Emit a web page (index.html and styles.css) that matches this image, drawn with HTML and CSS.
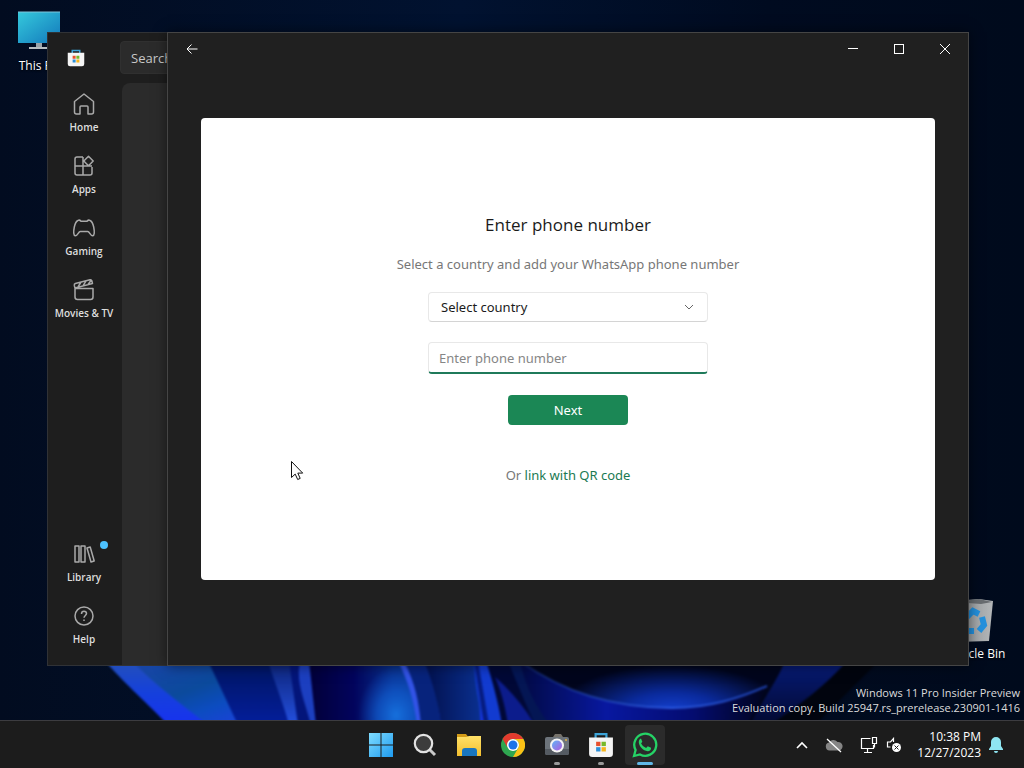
FILE: index.html
```html
<!DOCTYPE html>
<html lang="en">
<head>
<meta charset="utf-8">
<meta name="viewport" content="width=device-width, initial-scale=1">
<title>Desktop</title>
<link rel="stylesheet" href="styles.css">
</head>
<body>
<svg class="defs" width="0" height="0" aria-hidden="true">
  <defs>
    <linearGradient id="w1" x1="0" y1="0" x2="0" y2="1"><stop offset="0" stop-color="#2450b8"/><stop offset=".5" stop-color="#1540dc"/><stop offset="1" stop-color="#1832f0"/></linearGradient>
    <linearGradient id="w2" x1="0" y1="0" x2="1" y2="1"><stop offset="0" stop-color="#1a44a8"/><stop offset=".4" stop-color="#0b4a9c"/><stop offset=".6" stop-color="#0c4cc0"/><stop offset="1" stop-color="#2a38f0"/></linearGradient>
    <linearGradient id="w3" x1="0" y1="0" x2="0" y2="1"><stop offset="0" stop-color="#001560"/><stop offset="1" stop-color="#041e9c"/></linearGradient>
    <linearGradient id="w4" x1="0" y1="0" x2="0" y2="1"><stop offset="0" stop-color="#0d2478"/><stop offset="1" stop-color="#2450e0"/></linearGradient>
    <linearGradient id="w5" x1="0" y1="0" x2="1" y2="0"><stop offset="0" stop-color="#020038"/><stop offset=".4" stop-color="#02045c"/><stop offset=".75" stop-color="#08308c"/><stop offset="1" stop-color="#0a3c98"/></linearGradient>
    <radialGradient id="w6"><stop offset="0" stop-color="#1670dc"/><stop offset=".5" stop-color="#115cd0" stop-opacity=".7"/><stop offset="1" stop-color="#1050c8" stop-opacity="0"/></radialGradient>
    <radialGradient id="w7" gradientUnits="userSpaceOnUse" cx="0" cy="0" r="1" gradientTransform="matrix(115 0 0 46 672 46)"><stop offset="0" stop-color="#1440d0"/><stop offset=".4" stop-color="#0a2a9c"/><stop offset="1" stop-color="#01051c"/></radialGradient>
    <linearGradient id="w8" x1="0" y1="0" x2="1" y2="0"><stop offset="0" stop-color="#02104c"/><stop offset="1" stop-color="#0a3090"/></linearGradient>
    <linearGradient id="w9" x1="0" y1="0" x2="1" y2="0"><stop offset="0" stop-color="#020a44"/><stop offset=".35" stop-color="#0818a0"/><stop offset=".7" stop-color="#040c70"/><stop offset="1" stop-color="#01041c"/></linearGradient>
    <linearGradient id="w10" x1="0" y1="0" x2="1" y2="0"><stop offset="0" stop-color="#1b3a90" stop-opacity=".5"/><stop offset=".6" stop-color="#2a58e0"/><stop offset="1" stop-color="#1c40b0"/></linearGradient>
    <linearGradient id="w11" x1="0" y1="0" x2="0" y2="1"><stop offset="0" stop-color="#071c78"/><stop offset="1" stop-color="#020830"/></linearGradient>
    <linearGradient id="screen" x1="0" y1="0" x2="1" y2="1"><stop offset="0" stop-color="#35c9dc"/><stop offset="1" stop-color="#1278bb"/></linearGradient>
    <linearGradient id="win" x1="0" y1="0" x2="1" y2="1"><stop offset="0" stop-color="#7fdcff"/><stop offset="1" stop-color="#1e9bf0"/></linearGradient>
    <linearGradient id="folder" x1="0" y1="0" x2="0" y2="1"><stop offset="0" stop-color="#ffe168"/><stop offset="1" stop-color="#f3bf2f"/></linearGradient>
    <linearGradient id="bin" x1="0" y1="0" x2="1" y2="0"><stop offset="0" stop-color="#8c9093"/><stop offset="1" stop-color="#b4b7b9"/></linearGradient>
    <linearGradient id="lens" x1="0" y1="0" x2="1" y2="1"><stop offset="0" stop-color="#5fb4f5"/><stop offset="1" stop-color="#b05be0"/></linearGradient>
    <symbol id="store" viewBox="0 0 24 24">
      <path d="M7 7V2h10v5" fill="none" stroke="#3da4d8" stroke-width="2"/>
      <path d="M1 5h22v15a3 3 0 0 1-3 3H4a3 3 0 0 1-3-3z" fill="#f5f5f5"/>
      <path d="M7.500 9h4v4h-4z" fill="#e8502c"/><path d="M12.500 9h4v4h-4z" fill="#76b82a"/><path d="M7.500 14h4v4h-4z" fill="#2c8fd8"/><path d="M12.500 14h4v4h-4z" fill="#f5b51e"/>
    </symbol>
  </defs>
</svg>

<div class="screen">
  <main class="desktop">
    <svg class="wallpaper" viewBox="0 0 1024 55" preserveAspectRatio="none" aria-hidden="true">
      <path d="M105-4H600V60H168C142 33 124 18 105-4z" fill="url(#w1)"/>
      <path d="M132-4H300V60H208C180 38 155 20 132-4z" fill="url(#w2)"/>
      <path d="M208-4h90v64h-60z" fill="url(#w3)"/>
      <path d="M268-4h40l8 64h-27c-5-20-13-38-21-64z" fill="url(#w4)"/>
      <path d="M289-4h12l13 64h-16z" fill="#03157a"/>
      <path d="M300-4h12l4 64h-5C303 30 296 18 300-4z" fill="#1c3fc0"/>
      <path d="M309-4H408l12 64H316z" fill="url(#w5)"/>
      <ellipse cx="396" cy="50" rx="38" ry="48" fill="url(#w6)"/>
      <path d="M400-4h24c12 24 14 42 17 64h-24c0-24-6-42-17-64z" fill="#07237c"/>
      <path d="M398-4h6c12 24 15 42 17 64h-4C414 36 408 16 398-4z" fill="#3253e6"/>
      <path d="M424-4h52l5 64h-40c-3-24-8-42-17-64z" fill="url(#w8)"/>
      <path d="M474-4h12c9 24 12 42 16 64h-17c-7-22-10-40-11-64z" fill="#123bd0"/>
      <path d="M478-4l11 64h-5L474-4z" fill="#061c80"/>
      <path d="M486-4h140v64H502C498 36 493 18 486-4z" fill="#010836"/>
      <path d="M495 12c14 12 28 28 40 48h-27C505 40 501 26 495 12z" fill="#0c1c8c"/>
      <path d="M508-4h15C548 22 578 34 615 38v22h-80C524 35 516 16 508-4z" fill="#041654"/>
      <path d="M520-4h290C790 20 770 40 750 60H580z" fill="#01051c"/>
      <path d="M520-4C564 28 616 43 672 43c38 0 68-10 95-22L730-4z" fill="url(#w7)"/>
      <path d="M520-4C564 28 616 43 672 43c38 0 68-10 95-22-6 14-13 26-20 39H550c-14-18-24-36-30-64z" fill="url(#w9)"/>
      <path d="M520-4C564 28 616 43 672 43c38 0 68-10 95-22" fill="none" stroke="url(#w10)" stroke-width="2"/>
      <path d="M785-4h62C825 22 798 40 770 60H750C762 36 776 18 785-4z" fill="url(#w11)"/>
      <path d="M847-4h32L815 60h-44C800 40 825 22 847-4z" fill="#01040e"/>
    </svg>

    <div class="shortcut shortcut-pc">
      <svg width="44" height="40" viewBox="0 0 44 40" aria-hidden="true">
        <path d="M1 1h42v31H1z" fill="url(#screen)"/><path d="M1 1h42" stroke="#7fc5dc"/><path d="M19 32h6v4h-6z" fill="#9aa3a8"/><path d="M12 37h20" stroke="#b7bdc0" stroke-width="2"/>
      </svg>
      <span>This PC</span>
    </div>
    <div class="shortcut shortcut-bin">
      <svg width="44" height="46" viewBox="0 0 44 46" aria-hidden="true">
        <path d="M1 3l26-2 14 2-4 40-32 1z" fill="url(#bin)"/><path d="M3 4l24-3 13 3-11 2z" fill="#686c70"/>
        <g fill="none" stroke="#2490dc" stroke-width="6"><path d="M15 19l6-6 6 3"/><path d="M30 19l2 8-5 6"/><path d="M22 33h-7l-3-7"/></g>
      </svg>
      <span>Recycle Bin</span>
    </div>
    <p class="watermark">Windows 11 Pro Insider Preview<br>Evaluation copy. Build 25947.rs_prerelease.230901-1416</p>

    <section class="window store-window" aria-label="Microsoft Store">
      <nav class="store-nav">
        <svg class="store-logo" width="18" height="18" aria-hidden="true"><use href="#store"/></svg>
        <button class="nav-item" type="button">
          <svg width="24" height="24" viewBox="0 0 24 24" aria-hidden="true"><path d="M2.500 9.500L12 2l9.500 7.500V20q0 2-2 2H16v-7q0-1-1-1H9q-1 0-1 1v7H4.500q-2 0-2-2z"/></svg>Home</button>
        <button class="nav-item" type="button">
          <svg width="24" height="24" viewBox="0 0 24 24" aria-hidden="true"><path d="M11 3H5Q3 3 3 5v14q0 2 2 2h13q2 0 2-2v-6M3 12h17M11 3v18M16.500 2.300l4.700 4.700-4.700 4.700L11.800 7z"/></svg>Apps</button>
        <button class="nav-item" type="button">
          <svg width="24" height="24" viewBox="0 0 24 24" aria-hidden="true"><path d="M6 4.500q1.500-1 3 .8h6q1.500-1.800 3-.8 2.500 1 3.700 6.500c1 5 .8 8.500-1 8.800-2 .3-3.200-4.300-5-4.300H8.300c-1.800 0-3 4.600-5 4.300-1.800-.3-2-3.800-1-8.800Q3.500 5.500 6 4.500z"/></svg>Gaming</button>
        <button class="nav-item" type="button">
          <svg width="24" height="24" viewBox="0 0 24 24" aria-hidden="true"><path d="M3 10.500h18V19q0 2.500-2.500 2.500h-13Q3 21.500 3 19zM3 10L2.300 7.500q-.3-1.500 1-2L18 1.800q1.500-.3 1.800 1L20.500 5.500zM6 9l3-5M11 7.800l3-5M16 6.500l3-4"/></svg>Movies &amp; TV</button>
        <span class="nav-spacer"></span>
        <button class="nav-item" type="button"><span class="dot"></span>
          <svg width="24" height="24" viewBox="0 0 24 24" aria-hidden="true"><path d="M3 4h4v16H3zM9 4h4v16H9zM15 6l3.200-1 4 14-3.200 1z"/></svg>Library</button>
        <button class="nav-item" type="button">
          <svg width="24" height="24" viewBox="0 0 24 24" aria-hidden="true"><circle cx="12" cy="12" r="9"/><path d="M9.500 10q0-2.700 2.500-2.700t2.500 2.300c0 1.800-2.500 2-2.500 4.200M12 15.500v1.500"/></svg>Help</button>
      </nav>
      <div class="store-body">
        <input class="store-search" type="search" placeholder="Search apps, games, movies, and more" aria-label="Search the store">
        <div class="store-page"></div>
      </div>
    </section>

    <section class="window app-window" aria-label="WhatsApp">
      <header class="titlebar">
        <button class="title-btn back" type="button" aria-label="Back"><svg width="12" height="12" viewBox="0 0 12 12"><path d="M11.500 6H1M5.500 1.500L1 6l4.500 4.500"/></svg></button>
        <span class="title-space"></span>
        <button class="title-btn" type="button" aria-label="Minimize"><svg width="12" height="12" viewBox="0 0 12 12"><path d="M1 5.500h10"/></svg></button>
        <button class="title-btn" type="button" aria-label="Maximize"><svg width="12" height="12" viewBox="0 0 12 12"><rect x="1.500" y="1.500" width="9" height="9"/></svg></button>
        <button class="title-btn" type="button" aria-label="Close"><svg width="12" height="12" viewBox="0 0 12 12"><path d="M1 1l10 10M11 1L1 11"/></svg></button>
      </header>
      <form class="card">
        <h1>Enter phone number</h1>
        <p class="hint">Select a country and add your WhatsApp phone number</p>
        <div class="select-wrap">
          <select class="country" aria-label="Country"><option>Select country</option></select>
          <svg class="chevron" width="10" height="6" viewBox="0 0 10 6" aria-hidden="true"><path d="M1 1l4 4 4-4" fill="none" stroke="#666"/></svg>
        </div>
        <input class="phone" type="tel" placeholder="Enter phone number" aria-label="Phone number">
        <button class="next" type="button">Next</button>
        <p class="alt">Or <a href="#qr">link with QR code</a></p>
      </form>
    </section>

    <svg class="cursor" width="14" height="21" viewBox="0 0 14 21" aria-hidden="true"><path d="M1.500 1.500v16l3.700-3.400 2.500 5.400 2.500-1.100-2.400-5.300h4.900z" fill="#fff" stroke="#111"/></svg>
  </main>

  <footer class="taskbar">
    <div class="apps">
      <button class="task" type="button" aria-label="Start"><svg width="24" height="24" viewBox="0 0 24 24"><path d="M0 0h11.500v11.500H0zM12.500 0H24v11.500H12.500zM0 12.500h11.500V24H0zM12.500 12.500H24V24H12.500z" fill="url(#win)"/></svg></button>
      <button class="task" type="button" aria-label="Search"><svg width="24" height="24" viewBox="0 0 24 24"><path d="M16.500 16.500L22 22" stroke="#c9c9c9" stroke-width="3"/><circle cx="10.500" cy="10.500" r="8.700" fill="#3c3c3c" stroke="#e2e2e2" stroke-width="2.200"/></svg></button>
      <button class="task" type="button" aria-label="File Explorer"><svg width="26" height="24" viewBox="0 0 26 24"><path d="M1 1h9l3 4H1z" fill="#d39b17"/><path d="M1 4h9l3-1h12v20H1z" fill="url(#folder)"/><path d="M6 23v-5q0-3 3-3h9q3 0 3 3v5z" fill="#1976c0"/></svg></button>
      <button class="task" type="button" aria-label="Chrome"><svg width="24" height="24" viewBox="0 0 24 24"><circle cx="12" cy="12" r="12" fill="#2fa650"/><path d="M1.600 6A12 12 0 0 1 22.400 6H12a6 6 0 0 0-5.200 9z" fill="#e33b2e"/><path d="M22.400 6A12 12 0 0 1 12 24l5.200-9A6 6 0 0 0 12 6z" fill="#fbc116"/><circle cx="12" cy="12" r="6" fill="#fff"/><circle cx="12" cy="12" r="4.500" fill="#1a73e8"/></svg></button>
      <button class="task open" type="button" aria-label="Camera"><svg width="24" height="24" viewBox="0 0 24 24"><path d="M8 4l2-3h6l2 3z" fill="#77736b"/><rect x="0" y="4" width="24" height="18" rx="2" fill="#6d747b"/><path d="M0 16h24v4q0 2-2 2H2q-2 0-2-2z" fill="#555b62"/><circle cx="12" cy="12.500" r="7" fill="#f4f4f4"/><circle cx="12" cy="12.500" r="5" fill="url(#lens)"/><circle cx="21" cy="7" r="1" fill="#e3b341"/></svg></button>
      <button class="task open" type="button" aria-label="Microsoft Store"><svg width="26" height="26"><use href="#store"/></svg></button>
      <button class="task active" type="button" aria-label="WhatsApp"><svg width="26" height="26" viewBox="0 0 26 26"><path d="M2 24l1.600-6A11 11 0 1 1 8 22.400z" fill="none" stroke="#25d366" stroke-width="2.300"/><path d="M9 6.500l1.300 3.200-1.200 1.700q1.600 3.300 5 4.700l1.700-1.900 3.200 1.500c.4 2-1.400 3.500-3.200 3.500C11 18.800 7 14 6.800 10.500 6.700 8.500 7.700 6.700 9 6.500z" fill="#25d366"/></svg></button>
    </div>
    <div class="tray">
      <svg width="12" height="8" viewBox="0 0 12 8" aria-label="Hidden icons"><path d="M1 7l5-5 5 5" fill="none" stroke="#fff" stroke-width="1.600"/></svg>
      <svg width="18" height="16" viewBox="0 0 18 16" aria-label="OneDrive"><path d="M4.500 13.500a4 4 0 0 1-.5-7.900 5 5 0 0 1 8.500-.6 4.300 4.300 0 0 1 1.500 8.500z" fill="#858585"/><path d="M2 2l14 13" stroke="#fff" stroke-width="1.300"/></svg>
      <svg class="net" width="18" height="18" viewBox="0 0 18 18" aria-label="Network"><path d="M10.500 2.500h-9v10h12V9M7.500 12.500v4M4 16.500h8M12.500 1.500h4v6h-4zM14.500 7.500v4" fill="none" stroke="#fff" stroke-width="1.200"/></svg>
      <svg width="16" height="16" viewBox="0 0 16 16" aria-label="Muted"><path d="M7.500 5V1.500L4.500 5H1.500v5h3" fill="none" stroke="#fff" stroke-width="1.200"/><circle cx="10.500" cy="10.500" r="4.500" fill="#fff"/><path d="M8.500 8.500l4 4M12.500 8.500l-4 4" stroke="#222"/></svg>
      <time class="clock" datetime="2023-12-27T22:38">10:38 PM<br>12/27/2023</time>
      <svg width="14" height="16" viewBox="0 0 14 16" aria-label="Notifications"><path d="M7 0a5 5 0 0 1 5 5v4l2 3v1H0v-1l2-3V5a5 5 0 0 1 5-5zM5 14h4a2 2 0 0 1-4 0z" fill="#8fe6f2"/></svg>
    </div>
  </footer>
</div>
</body>
</html>
```

FILE: styles.css
```css
* { box-sizing: border-box; }
body { margin: 0; font-family: "Open Sans", "Noto Sans", sans-serif; color: #fff; }
button, input, select { font: inherit; color: inherit; }
button { padding: 0; border: 0; background: none; }
h1, p { margin: 0; }
.defs { position: absolute; }

.screen { display: flex; flex-direction: column; height: 100vh; }

.desktop {
  position: relative;
  flex: 1;
  overflow: hidden;
  background: linear-gradient(90deg, #020c20 0%, #011230 45%, #000b20 75%, #000a1c 100%);
}
.wallpaper { position: absolute; left: 0; bottom: 0; width: 100%; height: 55px; filter: blur(1px); overflow: visible; }

.shortcut {
  position: absolute;
  display: flex;
  flex-direction: column;
  align-items: center;
  width: 76px;
  font-size: 12px;
  line-height: 16px;
  text-shadow: 0 1px 2px #000;
}
.shortcut-pc { left: 1px; top: 11px; gap: 7px; }
.shortcut-bin { right: 12px; bottom: 58px; gap: 2px; }

.watermark {
  position: absolute;
  right: 4px;
  bottom: 5px;
  font-size: 11px;
  line-height: 15px;
  text-align: right;
  color: #dcdcdc;
}

.window { position: absolute; top: 32px; bottom: 54px; background: #202020; border: 1px solid #454545; }
.store-window { left: 47px; width: 400px; display: flex; background: #1e1e1e; border-color: #303236; }
.app-window { left: 167px; right: 55px; display: flex; flex-direction: column; padding-bottom: 85px; box-shadow: 0 0 12px rgba(0, 0, 0, .5); }

.store-nav { display: flex; flex-direction: column; align-items: center; width: 72px; padding: 16px 0 4px; }
.store-logo { margin: 0 17px 20px 0; }
.nav-item {
  position: relative;
  display: flex;
  flex-direction: column;
  align-items: center;
  gap: 4px;
  width: 72px;
  height: 62px;
  padding-top: 5px;
  font-size: 10px;
  font-weight: 600;
  line-height: 14px;
  white-space: nowrap;
  color: #dedede;
}
.nav-item svg { fill: none; stroke: #a9a9a9; stroke-width: 1.5; stroke-linejoin: round; }
.nav-spacer { flex: 1; }
.dot { position: absolute; top: 4px; right: 12px; width: 8px; height: 8px; border-radius: 50%; background: #4cc2ff; }

.store-body { flex: 1; display: flex; flex-direction: column; gap: 9px; padding-top: 8px; padding-left: 2px; }
.store-search {
  height: 33px;
  margin-right: 20px;
  margin-left: -2px;
  padding: 0 10px;
  border: 1px solid #303030;
  border-radius: 4px;
  background: #2b2b2b;
  font-size: 13px;
}
.store-search::placeholder { color: #c8c8c8; opacity: 1; }
.store-page { flex: 1; border-radius: 8px 0 0 0; background: #2b2b2b; }

.titlebar { display: flex; height: 32px; margin-bottom: 53px; }
.title-btn { display: grid; place-items: center; width: 46px; }
.title-btn.back { width: 48px; }
.title-btn svg { fill: none; stroke: #fff; }
.title-space { flex: 1; }

.card {
  flex: 1;
  display: flex;
  flex-direction: column;
  align-items: center;
  justify-content: center;
  margin: 0 33px;
  border-radius: 4px;
  background: #fff;
  color: #1b1b1b;
  font-family: "Noto Sans", "Open Sans", sans-serif;
  font-size: 13px;
  line-height: 20px;
}
.card h1 { font-family: "Open Sans", sans-serif; font-size: 17px; font-weight: 400; line-height: 24px; }
.hint { margin-top: 17px; color: #777; }
.select-wrap { position: relative; width: 280px; margin-top: 18px; }
.country {
  display: block;
  appearance: none;
  width: 100%;
  height: 30px;
  padding: 0 12px;
  border: 1px solid #e8e8e8;
  border-bottom-color: #d4d4d4;
  border-radius: 4px;
  background: #fff;
}
.chevron { position: absolute; right: 14px; top: 12px; pointer-events: none; }
.phone {
  width: 280px;
  height: 32px;
  margin-top: 20px;
  padding: 0 10px;
  border: 1px solid #e8e8e8;
  border-bottom: 2px solid #1f7a5a;
  border-radius: 4px;
  background: #fff;
}
.phone::placeholder { color: #868686; opacity: 1; }
.next { width: 120px; height: 30px; margin-top: 21px; border-radius: 4px; background: #1b8755; color: #fff; }
.alt { margin-top: 40px; color: #777; }
.alt a { color: #1b7a53; text-decoration: none; }

.cursor { position: absolute; left: 290px; top: 460px; }

.taskbar {
  display: grid;
  grid-template-columns: 1fr auto 1fr;
  align-items: center;
  height: 48px;
  border-top: 1px solid #3c3c40;
  background: #1c1c1c;
  position: relative;
}
.apps { grid-column: 2; display: flex; gap: 4px; padding-left: 2px; }
.task { position: relative; display: grid; place-items: center; width: 40px; height: 40px; border-radius: 4px; }
.task.active { background: #2b2b2b; }
.task.open::after, .task.active::after {
  content: "";
  position: absolute;
  bottom: 0;
  left: 17px;
  width: 6px;
  height: 3px;
  border-radius: 2px;
  background: #9a9a9a;
}
.task.active::after { left: 12px; width: 16px; background: #60b8e8; }
.tray { display: flex; align-items: center; justify-content: flex-end; padding-right: 21px; }
.tray svg { flex: none; margin-right: 17px; }
.tray .net { margin-right: 8px; }
.tray .net + svg { margin-right: 15px; }
.clock { margin-right: 8px; font-size: 12px; line-height: 16px; text-align: right; }
.tray .clock + svg { margin-right: 0; }
```
